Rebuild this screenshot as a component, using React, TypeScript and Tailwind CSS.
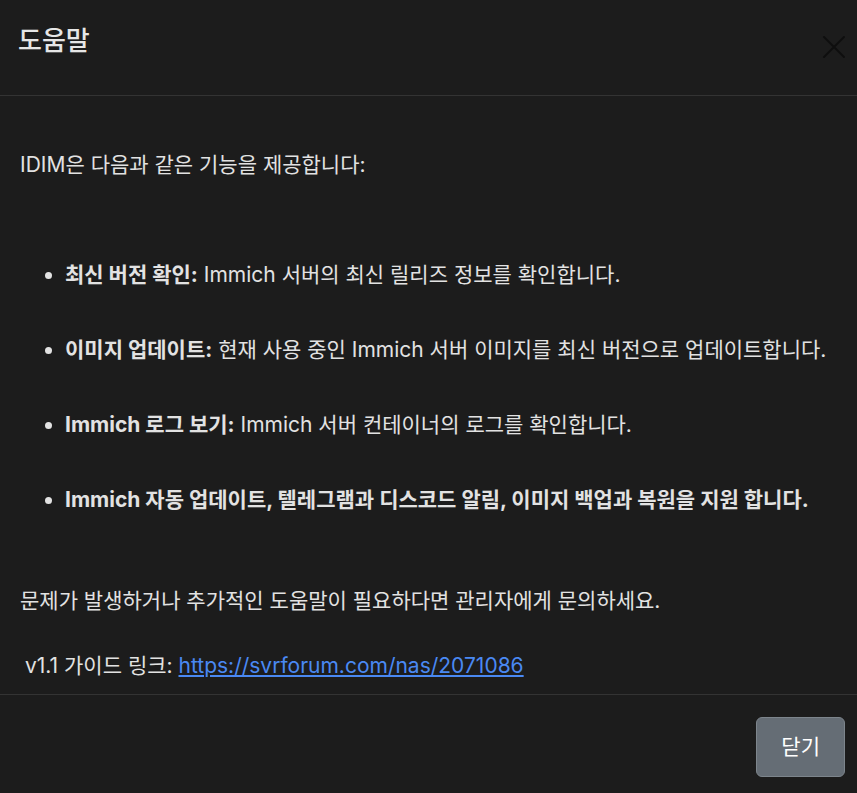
import React from "react";

const features = [
  { title: "최신 버전 확인:", desc: " Immich 서버의 최신 릴리즈 정보를 확인합니다." },
  { title: "이미지 업데이트:", desc: " 현재 사용 중인 Immich 서버 이미지를 최신 버전으로 업데이트합니다." },
  { title: "Immich 로그 보기:", desc: " Immich 서버 컨테이너의 로그를 확인합니다." },
  { title: "Immich 자동 업데이트, 텔레그램과 디스코드 알림, 이미지 백업과 복원을 지원 합니다.", desc: "" },
];

export default function App() {
  return (
    <div
      className="w-[857px] h-[793px] overflow-hidden bg-[#1c1c1c] text-[#e2e2e2]"
      style={{ fontFamily: 'Inter, "Noto Sans CJK KR", sans-serif' }}
    >
      {/* Header */}
      <div className="h-[96px] border-b border-[#333333] flex items-start justify-between">
        <h5 className="pt-[26px] pl-[18px] text-[26px] leading-[30px] font-medium text-[#e6e6e6]">
          도움말
        </h5>
        <button className="mt-[34px] mr-[10px] w-[26px] h-[26px] flex items-center justify-center">
          <svg width="24" height="24" viewBox="0 0 24 24" fill="none" stroke="#0e0e0e" strokeWidth="2" strokeLinecap="round">
            <path d="M2 2 L22 22 M22 2 L2 22" />
          </svg>
        </button>
      </div>

      {/* Body */}
      <div className="px-[20px] pb-[13px] text-[21px] leading-[30px]">
        <p className="mt-[54px]">IDIM은 다음과 같은 기능을 제공합니다:</p>
        <ul className="mt-[80px] pl-[45px] list-disc flex flex-col gap-[45px]">
          {features.map((f) => (
            <li key={f.title} className="whitespace-nowrap">
              <strong className="font-bold">{f.title}</strong>
              {f.desc}
            </li>
          ))}
        </ul>
        <p className="mt-[71px]">문제가 발생하거나 추가적인 도움말이 필요하다면 관리자에게 문의하세요.</p>
        <p className="mt-[35px] pl-[5px]">
          v1.1 가이드 링크:{" "}
          <a href="#" className="text-[#4a89f3] underline">
            https://svrforum.com/nas/2071086
          </a>
        </p>
      </div>

      {/* Footer */}
      <div className="border-t border-[#333333] flex justify-end pt-[22px] pr-[12px]">
        <button className="px-[24px] py-[14px] text-[21px] leading-[30px] rounded-[6px] bg-[#656d75] border border-[#7d858c] text-white">
          닫기
        </button>
      </div>
    </div>
  );
}
